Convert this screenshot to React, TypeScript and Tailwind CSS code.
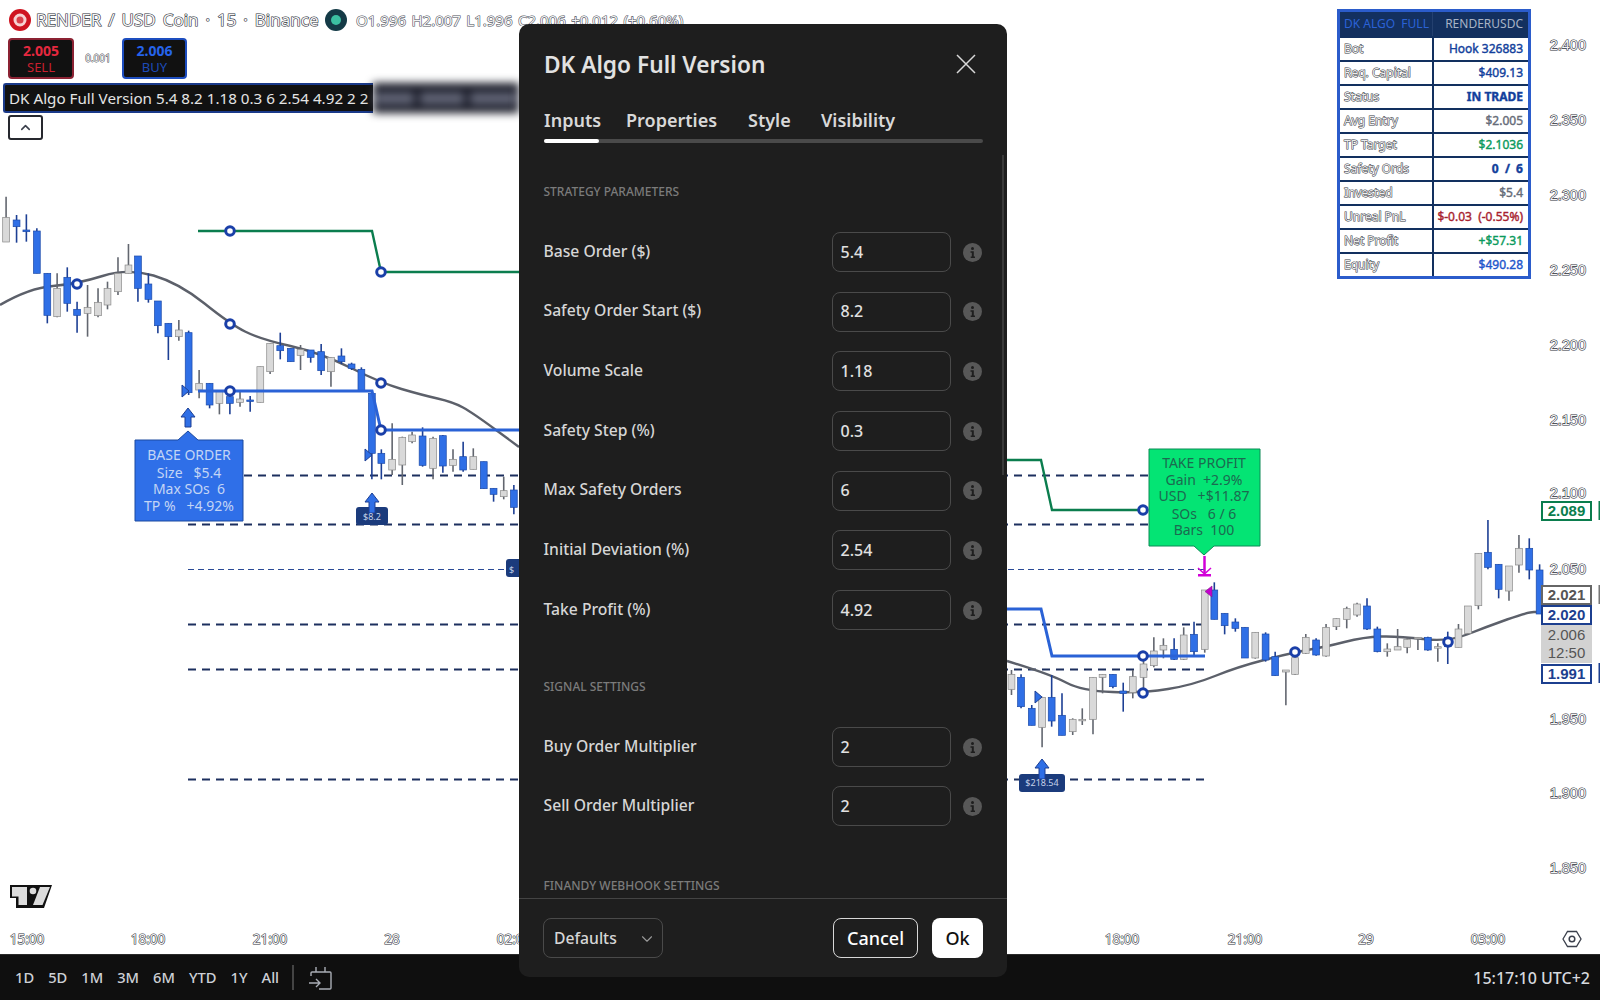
import { ChevronDown, ChevronUp } from "lucide-react";

type Candle = [number, number, number, number, number, "g" | "b"];

const leftCandles: Candle[] = [
  [18, 50, 112, 186, 186, "g"], [49, 105, 120, 140, 188, "b"], [78, 103, 150, 155, 185, "b"], [109, 145, 153, 280, 280, "b"],
  [140, 280, 280, 406, 430, "b"], [169, 280, 325, 410, 412, "g"], [199, 262, 292, 370, 395, "b"], [228, 365, 388, 406, 458, "b"],
  [259, 315, 382, 400, 470, "g"], [290, 325, 367, 407, 412, "g"], [318, 305, 325, 375, 388, "g"], [349, 232, 280, 335, 345, "g"],
  [380, 192, 255, 280, 280, "g"], [408, 228, 228, 325, 365, "b"], [439, 280, 312, 358, 368, "b"], [467, 363, 363, 437, 460, "b"],
  [498, 430, 430, 470, 540, "b"], [529, 420, 450, 470, 482, "g"], [558, 452, 458, 638, 645, "b"], [589, 570, 610, 630, 655, "g"],
  [620, 610, 610, 675, 685, "b"], [649, 630, 635, 670, 703, "g"], [680, 630, 650, 670, 703, "b"], [710, 635, 657, 667, 680, "g"],
  [740, 648, 660, 664, 695, "b"], [770, 560, 560, 667, 667, "g"], [799, 490, 490, 575, 582, "g"], [829, 458, 497, 512, 538, "b"],
  [860, 505, 505, 545, 545, "b"], [889, 495, 508, 526, 570, "g"], [919, 510, 510, 532, 548, "b"], [950, 492, 515, 572, 585, "b"],
  [979, 532, 532, 575, 620, "g"], [1010, 505, 528, 545, 552, "b"], [1040, 548, 552, 565, 570, "b"], [1069, 562, 568, 635, 635, "b"],
  [1100, 640, 640, 820, 898, "b"], [1128, 808, 820, 850, 898, "b"], [1160, 730, 838, 870, 885, "g"], [1190, 770, 772, 855, 915, "g"],
  [1219, 755, 765, 785, 790, "g"], [1250, 742, 768, 856, 860, "b"], [1281, 770, 775, 865, 898, "g"], [1310, 765, 767, 858, 878, "b"],
  [1340, 808, 838, 856, 875, "g"], [1370, 785, 830, 870, 875, "b"], [1400, 805, 830, 868, 868, "g"], [1431, 845, 845, 926, 926, "b"],
  [1460, 925, 925, 943, 965, "b"], [1490, 890, 932, 950, 958, "g"], [1520, 915, 930, 982, 1003, "b"],
];

const rightCandles: Candle[] = [
  [30, 720, 733, 778, 795, "g"], [55, 733, 742, 830, 835, "b"], [83, 825, 835, 886, 886, "b"], [110, 800, 802, 892, 952, "g"],
  [135, 735, 802, 873, 890, "b"], [162, 790, 856, 916, 916, "b"], [190, 865, 868, 905, 915, "g"], [215, 835, 868, 872, 885, "g"],
  [243, 742, 742, 868, 913, "g"], [268, 733, 733, 742, 790, "g"], [295, 733, 733, 770, 775, "b"], [322, 758, 783, 790, 845, "b"],
  [347, 720, 740, 788, 805, "g"], [375, 690, 702, 742, 775, "g"], [402, 622, 663, 707, 712, "g"], [427, 625, 646, 660, 685, "g"],
  [455, 625, 658, 688, 690, "b"], [480, 592, 615, 688, 690, "g"], [507, 575, 613, 665, 675, "b"], [535, 480, 480, 658, 668, "g"],
  [560, 457, 480, 568, 568, "b"], [587, 550, 550, 587, 613, "b"], [615, 565, 576, 595, 605, "b"], [640, 592, 592, 684, 684, "b"],
  [667, 607, 607, 684, 686, "g"], [694, 607, 612, 690, 695, "b"], [719, 665, 680, 737, 737, "b"], [747, 720, 720, 726, 826, "g"],
  [771, 660, 683, 733, 735, "g"], [799, 612, 622, 670, 672, "g"], [826, 625, 630, 675, 677, "b"], [852, 582, 592, 678, 680, "g"],
  [879, 565, 566, 590, 600, "g"], [906, 530, 536, 568, 595, "g"], [933, 518, 522, 555, 560, "g"], [959, 505, 528, 597, 600, "b"],
  [986, 590, 597, 665, 667, "b"], [1012, 640, 657, 665, 680, "g"], [1039, 597, 650, 660, 660, "g"], [1064, 625, 628, 652, 670, "g"],
  [1092, 622, 622, 625, 660, "g"], [1118, 620, 622, 660, 662, "b"], [1144, 640, 650, 652, 695, "g"], [1170, 605, 622, 650, 702, "b"],
  [1198, 582, 597, 652, 652, "g"], [1223, 528, 528, 610, 615, "g"], [1250, 370, 370, 527, 538, "g"], [1275, 270, 367, 412, 418, "b"],
  [1303, 403, 403, 478, 505, "b"], [1330, 408, 408, 483, 512, "g"], [1356, 315, 355, 405, 428, "g"], [1383, 325, 355, 420, 448, "b"],
  [1410, 403, 420, 552, 552, "b"],
];

// candle numbers above were read off crops, so map them back to page pixels
const candles: Candle[] = [
  ...leftCandles.map(([x, a, b, c, d, k]): Candle => [x / 2.958, 180 + a / 3, 180 + b / 3, 180 + c / 3, 180 + d / 3, k]),
  ...rightCandles.map(([x, a, b, c, d, k]): Candle => [1000 + x / 2.613, 430 + a / 3, 430 + b / 3, 430 + c / 3, 430 + d / 3, k]),
];

const maLeft = [[0, 305], [29, 288], [77, 284], [128, 268], [179, 283], [230, 324], [260, 339], [321, 353], [381, 383], [422, 395], [453, 402], [473, 413], [519, 447]];
const maRight = [[1007, 661], [1050, 674], [1082, 691], [1143, 693], [1193, 685], [1237, 667], [1295, 652], [1325, 647], [1364, 637], [1398, 636], [1448, 642], [1486, 627], [1528, 612], [1540, 612]];

// rounds the corners of a polyline through the segment midpoints
const smooth = (pts: number[][]) => {
  let d = `M${pts[0][0]} ${pts[0][1]}`;
  for (let i = 1; i < pts.length - 1; i++) {
    const mx = (pts[i][0] + pts[i + 1][0]) / 2;
    const my = (pts[i][1] + pts[i + 1][1]) / 2;
    d += ` Q${pts[i][0]} ${pts[i][1]} ${mx} ${my}`;
  }
  const last = pts[pts.length - 1];
  return `${d} L${last[0]} ${last[1]}`;
};

const dots = [[77, 284], [230, 324], [381, 383], [230, 231], [381, 272], [230, 391], [381, 430], [1143, 510], [1143, 656], [1143, 693], [1295, 652], [1448, 642]];
const dashes = [475.5, 524.5, 624.5, 669.5, 779.5];
const prices = [["2.400", 45], ["2.350", 120], ["2.300", 195], ["2.250", 270], ["2.200", 345], ["2.150", 420], ["2.100", 492.5], ["2.050", 569], ["1.950", 719], ["1.900", 793], ["1.850", 868]] as const;
const times = [["15:00", 27], ["18:00", 148], ["21:00", 270], ["28", 392], ["02:00", 514], ["18:00", 1122], ["21:00", 1245], ["29", 1366], ["03:00", 1488]] as const;

const tableRows = [
  ["Bot", "Hook 326883", "text-[#123f9c]"],
  ["Req. Capital", "$409.13", "text-[#123f9c]"],
  ["Status", "IN TRADE", "text-[#123f9c] font-bold"],
  ["Avg Entry", "$2.005", "text-[#666c78]"],
  ["TP Target", "$2.1036", "text-[#0b9a5c]"],
  ["Safety Ords", "0  /  6", "text-[#123f9c] font-bold"],
  ["Invested", "$5.4", "text-[#666c78]"],
  ["Unreal PnL", "$-0.03  (-0.55%)", "text-[#a81f30]"],
  ["Net Profit", "+$57.31", "text-[#0b9a5c]"],
  ["Equity", "$490.28", "text-[#1f57cc]"],
];

const strategyInputs = [
  ["Base Order ($)", "5.4"],
  ["Safety Order Start ($)", "8.2"],
  ["Volume Scale", "1.18"],
  ["Safety Step (%)", "0.3"],
  ["Max Safety Orders", "6"],
  ["Initial Deviation (%)", "2.54"],
  ["Take Profit (%)", "4.92"],
];
const signalInputs = [
  ["Buy Order Multiplier", "2"],
  ["Sell Order Multiplier", "2"],
];

const Halo = ({ x, y, size, anchor = "middle", children }: { x: number; y: number; size: number; anchor?: "middle" | "end" | "start"; children: React.ReactNode }) => (
  <text x={x} y={y} fontSize={size} textAnchor={anchor} dominantBaseline="central" fill="#f4f4f4" stroke="#2c303a" strokeWidth={1.1} paintOrder="stroke">
    {children}
  </text>
);

const ChartDrawing = () => (
  <svg viewBox="0 0 1600 954" className="absolute inset-0 w-[1600px] h-[954px]">
    {dashes.map((y) => (
      <line key={y} x1={188} x2={1205} y1={y} y2={y} stroke="#1c2f5e" strokeWidth={2} strokeDasharray="8 6" />
    ))}
    <line x1={188} x2={1205} y1={569.5} y2={569.5} stroke="#2a4a96" strokeWidth={1} strokeDasharray="6 4" />

    <path d={smooth(maLeft)} fill="none" stroke="#5c606a" strokeWidth={2.4} />
    <path d={smooth(maRight)} fill="none" stroke="#5c606a" strokeWidth={2.4} />

    {candles.map(([x, wt, bt, bb, wb, k], i) => (
      <g key={i}>
        <line x1={x} x2={x} y1={wt} y2={wb} stroke={k === "b" ? "#1d3f94" : "#62666f"} strokeWidth={1.6} />
        <rect x={x - 3.4} y={bt} width={6.8} height={Math.max(bb - bt, 1.5)} fill={k === "b" ? "#2f6fe6" : "#d9d9d9"} stroke={k === "b" ? "#1d4aa8" : "#8a8a8a"} strokeWidth={0.7} />
      </g>
    ))}

    <polyline points="198,231 372,231 381,272 519,272" fill="none" stroke="#0b7d4e" strokeWidth={2.4} />
    <polyline points="1007,460 1041,460 1052,510 1143,510" fill="none" stroke="#0b7d4e" strokeWidth={2.4} />
    <polyline points="198,391 372,391 381,430 519,430" fill="none" stroke="#2a62d6" strokeWidth={3} />
    <polyline points="1007,609 1041,609 1052,656 1205,656" fill="none" stroke="#2a62d6" strokeWidth={3} />

    {dots.map(([x, y]) => (
      <circle key={`${x}-${y}`} cx={x} cy={y} r={4.3} fill="#fff" stroke="#1a3fa8" strokeWidth={3} />
    ))}

    {/* order markers */}
    <path d="M182 385 L189 391 L182 397 Z" fill="#2f6fe6" stroke="#1d3f94" />
    <path d="M365 449 L372 455 L365 461 Z" fill="#2f6fe6" stroke="#1d3f94" />
    <path d="M1035 691 L1042 697 L1035 703 Z" fill="#2f6fe6" stroke="#1d3f94" />
    <path d="M188 408 L195 417 L191 417 L191 427 L185 427 L185 417 L181 417 Z" fill="#2f6fe6" stroke="#1d3f94" />

    <rect x={356} y={507} width={32} height={18} rx={3} fill="#1b3b7c" />
    <path d="M372 493 L379 502 L375 502 L375 513 L369 513 L369 502 L365 502 Z" fill="#2f6fe6" stroke="#1d3f94" />
    <text x={372} y={516} fontSize={9} textAnchor="middle" dominantBaseline="central" fill="#c5d2ea">$8.2</text>

    <rect x={506} y={559} width={16} height={18} rx={3} fill="#1b3b7c" />
    <text x={509} y={569} fontSize={9} dominantBaseline="central" fill="#c5d2ea">$</text>

    <rect x={1019} y={774} width={46} height={18} rx={3} fill="#1b3b7c" />
    <path d="M1042 759 L1049 768 L1045 768 L1045 779 L1039 779 L1039 768 L1035 768 Z" fill="#2f6fe6" stroke="#1d3f94" />
    <text x={1042} y={782} fontSize={9} textAnchor="middle" dominantBaseline="central" fill="#c5d2ea">$218.54</text>

    {/* base order label */}
    <path d="M135 440 H178 L188 431 L198 440 H243 V521 H135 Z" fill="#2f6fe8" stroke="#1d4a9f" strokeLinejoin="round" />
    <g fontSize={14} textAnchor="middle" dominantBaseline="central" fill="#c3d5f5">
      <text x={189} y={454}>BASE ORDER</text>
      <text x={189} y={472}>{"Size\u00a0\u00a0\u00a0$5.4"}</text>
      <text x={189} y={488}>{"Max SOs\u00a0\u00a06"}</text>
      <text x={189} y={505}>{"TP %\u00a0\u00a0\u00a0+4.92%"}</text>
    </g>

    {/* take profit label */}
    <path d="M1149 449 H1260 V546 H1214 L1204 555 L1194 546 H1149 Z" fill="#04e474" stroke="#0d8a56" strokeLinejoin="round" />
    <g fontSize={14} textAnchor="middle" dominantBaseline="central" fill="#1c6a50">
      <text x={1204} y={462}>TAKE PROFIT</text>
      <text x={1204} y={479}>{"Gain\u00a0\u00a0+2.9%"}</text>
      <text x={1204} y={495}>{"USD\u00a0\u00a0\u00a0+$11.87"}</text>
      <text x={1204} y={513}>{"SOs\u00a0\u00a0\u00a06 / 6"}</text>
      <text x={1204} y={529}>{"Bars\u00a0\u00a0100"}</text>
    </g>
    <path d="M1204.500 556 V573" stroke="#d200d8" strokeWidth={2.500} />
    <path d="M1198 568 L1204.500 574 L1211 568" fill="none" stroke="#d200d8" strokeWidth={1.500} />
    <rect x={1198} y={574} width={13} height={2.500} fill="#d200d8" />
    <path d="M1212 586 L1205 591.500 L1212 597 Z" fill="#c400cc" stroke="#7a1c8a" strokeWidth={0.600} />

    {/* price scale */}
    <g className="font-['Liberation_Sans',sans-serif]">
      {prices.map(([p, y]) => (
        <Halo key={p} x={1586} y={y} size={14.5} anchor="end">{p}</Halo>
      ))}
    </g>
    <rect x={1598.500} y={501} width={1.500} height={19} fill="#0b7d4e" />
    <rect x={1598.500} y={585} width={1.500} height={19} fill="#777" />
    <rect x={1598.500} y={663} width={1.500} height={20} fill="#1c3f8f" />

    {/* time scale */}
    {times.map(([t, x]) => (
      <Halo key={`${t}-${x}`} x={x} y={939} size={13.500}>{t}</Halo>
    ))}

    {/* settings cog */}
    <path d="M1563 939 L1567.500 931.500 H1576.500 L1581 939 L1576.500 946.500 H1567.500 Z" fill="none" stroke="#3b404c" strokeWidth={1.300} />
    <circle cx={1572} cy={939} r={2.800} fill="none" stroke="#3b404c" strokeWidth={1.500} />

    {/* tradingview mark */}
    <path d="M10 885 H52 L44 908 H16 V898 H10 Z" fill="#111" />
    <path d="M12 887 H27 V905 H18.500 V896.500 H12 Z" fill="#dcdcdc" />
    <circle cx={33} cy={891} r={3.300} fill="#dcdcdc" />
    <path d="M40 887 H50 L42.500 905 H33 Z" fill="#dcdcdc" />
  </svg>
);

const PriceTag = ({ value, sub, className }: { value: string; sub?: string; className: string }) => (
  <div className={`w-[51px] flex flex-col items-center justify-center font-['Liberation_Sans',sans-serif] font-bold text-[15px] leading-[18px] ${className}`}>
    <span>{value}</span>
    {sub && <span>{sub}</span>}
  </div>
);

const Legend = () => (
  <div className="absolute left-[8px] top-[8px] flex flex-col items-start">
    <div className="flex items-center h-[24px] whitespace-nowrap">
      <svg width="24" height="24" viewBox="0 0 24 24">
        <circle cx="12" cy="12" r="11" fill="#cf1420" />
        <circle cx="12" cy="12" r="5" fill="#d9404a" stroke="#f6d2d2" strokeWidth="3" />
      </svg>
      <span className="ml-[4px] text-[17px] [word-spacing:2.500px] text-[#f4f4f4] [-webkit-text-stroke:1.200px_#2c303a] [paint-order:stroke_fill] w-[288px]">RENDER / USD Coin · 15 · Binance</span>
      <svg width="24" height="24" viewBox="0 0 24 24">
        <circle cx="12" cy="12" r="11" fill="#143a46" />
        <circle cx="12" cy="12" r="5" fill="#3cc0a2" />
      </svg>
      <span className="ml-[8px] text-[15px] [word-spacing:1.500px] text-[#f4f4f4] [-webkit-text-stroke:1.100px_#4a4e5a] [paint-order:stroke_fill]">O1.996 H2.007 L1.996 C2.006 +0.012 (+0.60%)</span>
    </div>
    <div className="flex items-center mt-[6px]">
      <div className="w-[66px] h-[41px] rounded-[4px] bg-[#111] border-2 border-[#8b2233] flex flex-col items-center justify-center leading-[17px]">
        <span className="text-[14px] font-bold text-[#e5283f]">2.005</span>
        <span className="text-[13px] text-[#c9202f]">SELL</span>
      </div>
      <span className="w-[48px] text-center text-[10px] text-[#f4f4f4] [-webkit-text-stroke:0.8px_#2c303a] [paint-order:stroke_fill]">0.001</span>
      <div className="w-[65px] h-[41px] rounded-[4px] bg-[#111] border-2 border-[#1d4dbf] flex flex-col items-center justify-center leading-[17px]">
        <span className="text-[14px] font-bold text-[#2563eb]">2.006</span>
        <span className="text-[13px] text-[#1d4bb8]">BUY</span>
      </div>
    </div>
    <div className="relative -ml-[5px] mt-[4px] h-[30px] w-[516px] flex items-center">
      <div className="h-[30px] w-[370px] pl-[4px] flex items-center bg-[#111] border-2 border-r-0 border-[#1a3a8a] rounded-l-[3px] text-[15.200px] text-[#e4e4e4] whitespace-nowrap">
        DK Algo Full Version 5.4 8.2 1.18 0.3 6 2.54 4.92 2 2
      </div>
      <div className="h-[30px] flex-1 flex items-center gap-[6px] bg-[#181a26] blur-[4px] pl-[2px]">
        <div className="w-[39px] h-[13px] bg-[#5e6172]" />
        <div className="w-[44px] h-[13px] bg-[#5e6172]" />
        <div className="w-[46px] h-[13px] bg-[#5e6172]" />
      </div>
    </div>
    <div className="mt-[2px] w-[35px] h-[25px] bg-white border-2 border-[#26282e] rounded-[3px] flex items-center justify-center">
      <ChevronUp size={15} strokeWidth={2.500} className="text-[#3b404c]" />
    </div>
  </div>
);

const StatsTable = () => (
  <div className="absolute left-[1337px] top-[9px] w-[194px] border-[3px] border-[#2b5ccb] text-[12px] whitespace-nowrap">
    <div className="grid grid-cols-[92px_1fr] h-[24px] bg-[#13305f] items-center">
      <span className="pl-[4px] h-full flex items-center whitespace-pre text-[#2b62d6]">DK ALGO  FULL</span>
      <span className="pr-[5px] h-full flex items-center justify-end border-l border-[#24406f] text-[#a8b3c6]">RENDERUSDC</span>
    </div>
    {tableRows.map(([label, value, tone]) => (
      <div key={label} className="grid grid-cols-[92px_1fr] h-[24px] bg-white border-t-2 border-[#12305f]">
        <span className="pl-[4px] flex items-center text-[#ececec] [-webkit-text-stroke:1px_#343843] [paint-order:stroke_fill]">{label}</span>
        <span className={`pr-[5px] flex items-center justify-end whitespace-pre border-l-2 border-[#12305f] [-webkit-text-stroke:0.4px_currentColor] ${tone}`}>{value}</span>
      </div>
    ))}
  </div>
);

const InfoDot = () => (
  <svg width="19" height="19" viewBox="0 0 19 19" className="shrink-0">
    <circle cx="9.500" cy="9.500" r="9.500" fill="#585858" />
    <circle cx="9.500" cy="5.500" r="1.500" fill="#1e1e1e" />
    <path d="M7.500 8.200 H10.800 V13.500 H12 V15 H7.700 V13.500 H8.800 V9.700 H7.500 Z" fill="#1e1e1e" />
  </svg>
);

const InputRow = ({ label, value }: { label: string; value: string }) => (
  <div className="flex items-center h-[40px]">
    <span className="flex-1 pb-[1px] text-[15.700px] text-[#d6d6d6]">{label}</span>
    <div className="w-[119px] h-[40px] rounded-[8px] border border-[#4a4a4a] pl-[8px] pb-[1px] flex items-center text-[16px] text-[#e0e0e0]">{value}</div>
    <div className="ml-[13px] -translate-x-[1px]">
      <InfoDot />
    </div>
  </div>
);

const SectionTitle = ({ children, className }: { children: string; className: string }) => (
  <div className={`text-[12px] leading-[16px] text-[#7b7b7b] ${className}`}>{children}</div>
);

const SettingsDialog = () => (
  <div className="absolute left-[519px] top-[24px] w-[488px] h-[953px] rounded-[10px] bg-[#1e1e1e] flex flex-col font-medium">
    <div className="px-[25px] pt-[25px]">
      <div className="flex items-center justify-between h-[32px]">
        <span className="text-[22.700px] font-semibold text-[#e2e2e2]">DK Algo Full Version</span>
        <svg width="20" height="20" viewBox="0 0 20 20" className="mr-[6px] -mt-[2px]" stroke="#d8d8d8" strokeWidth="1.500">
          <path d="M1 1 L19 19 M19 1 L1 19" />
        </svg>
      </div>
      <div className="flex mt-[27px] h-[24px] items-center text-[18px] font-semibold text-[#d8d8d8]">
        <span className="w-[82px]">Inputs</span>
        <span className="w-[122px]">Properties</span>
        <span className="w-[73px]">Style</span>
        <span>Visibility</span>
      </div>
      <div className="mt-[7px] h-[4px] w-[439px] rounded-full bg-[#4a4a4a]">
        <div className="h-[4px] w-[55px] rounded-full bg-white" />
      </div>
    </div>
    <div className="relative flex-1 overflow-hidden px-[24.500px] pt-[41px]">
      <div className="absolute right-[3px] top-[12px] h-[320px] w-[2px] bg-[#3a3a3a]" />
      <SectionTitle className="mb-[32px]">STRATEGY PARAMETERS</SectionTitle>
      <div className="flex flex-col gap-[19.700px] w-[439px]">
        {strategyInputs.map(([label, value]) => (
          <InputRow key={label} label={label} value={value} />
        ))}
      </div>
      <SectionTitle className="mt-[49px] mb-[32px]">SIGNAL SETTINGS</SectionTitle>
      <div className="flex flex-col gap-[19px] w-[439px]">
        {signalInputs.map(([label, value]) => (
          <InputRow key={label} label={label} value={value} />
        ))}
      </div>
      <SectionTitle className="mt-[52px]">FINANDY WEBHOOK SETTINGS</SectionTitle>
    </div>
    <div className="h-[79px] border-t border-[#444] px-[24px] pt-[19px] flex items-start justify-between">
      <div className="w-[120px] h-[40px] rounded-[8px] border border-[#4a4a4a] pl-[10px] pr-[6px] pt-[1px] flex items-center justify-between text-[15.700px] text-[#d6d6d6]">
        Defaults
        <ChevronDown size={18} strokeWidth={1.500} className="text-[#999]" />
      </div>
      <div className="flex gap-[14px]">
        <div className="w-[85px] h-[40px] rounded-[8px] border-[1.500px] border-[#d8d8d8] flex items-center justify-center text-[18px] text-white">Cancel</div>
        <div className="w-[51px] h-[40px] rounded-[8px] bg-white flex items-center justify-center text-[18px] text-[#111]">Ok</div>
      </div>
    </div>
  </div>
);

const BottomBar = () => (
  <div className="h-[46px] bg-[#0f0f0f] border-t border-[#2a2a2a] flex items-center pl-[15px] pr-[10px] text-[14.700px] font-medium text-[#cdd0d6]">
    <div className="flex gap-[14px]">
      {["1D", "5D", "1M", "3M", "6M", "YTD", "1Y", "All"].map((r) => (
        <span key={r}>{r}</span>
      ))}
    </div>
    <div className="ml-[13px] h-[25px] w-[2px] bg-[#444]" />
    <svg width="24" height="24" viewBox="0 0 24 24" className="ml-[15px]" fill="none" stroke="#a9adb5" strokeWidth="1.400">
      <path d="M2 10 V7 Q2 6 3 6 H21 Q22 6 22 7 V22 Q22 23 21 23 H10 M7 1 V6 M16 1 V6" />
      <path d="M0 17 H11 M7 13 L11 17 L7 21" />
    </svg>
    <span className="ml-auto text-[16px] text-[#d6d9de]">15:17:10 UTC+2</span>
  </div>
);

export default function App() {
  return (
    <div className="w-[1600px] h-[1000px] overflow-hidden bg-white flex flex-col font-['Noto_Sans',sans-serif]">
      <div className="relative flex-1">
        <ChartDrawing />
        <Legend />
        <StatsTable />
        <div className="absolute left-[1541px] top-[501px] flex flex-col">
          <PriceTag value="2.089" className="h-[20px] mb-[64px] bg-white border-2 border-[#0b7d4e] text-[#0b7d4e]" />
          <PriceTag value="2.021" className="h-[20px] bg-white border-2 border-[#666] text-[#555]" />
          <PriceTag value="2.020" className="h-[20px] bg-white border-2 border-[#1c3f8f] text-[#1c3f8f]" />
          <PriceTag value="2.006" sub="12:50" className="h-[38px] !font-normal bg-[#d2d2d2] text-[#555]" />
          <PriceTag value="1.991" className="h-[20px] mt-[1px] bg-white border-2 border-[#1c3f8f] text-[#1c3f8f]" />
        </div>
        <SettingsDialog />
      </div>
      <BottomBar />
    </div>
  );
}
